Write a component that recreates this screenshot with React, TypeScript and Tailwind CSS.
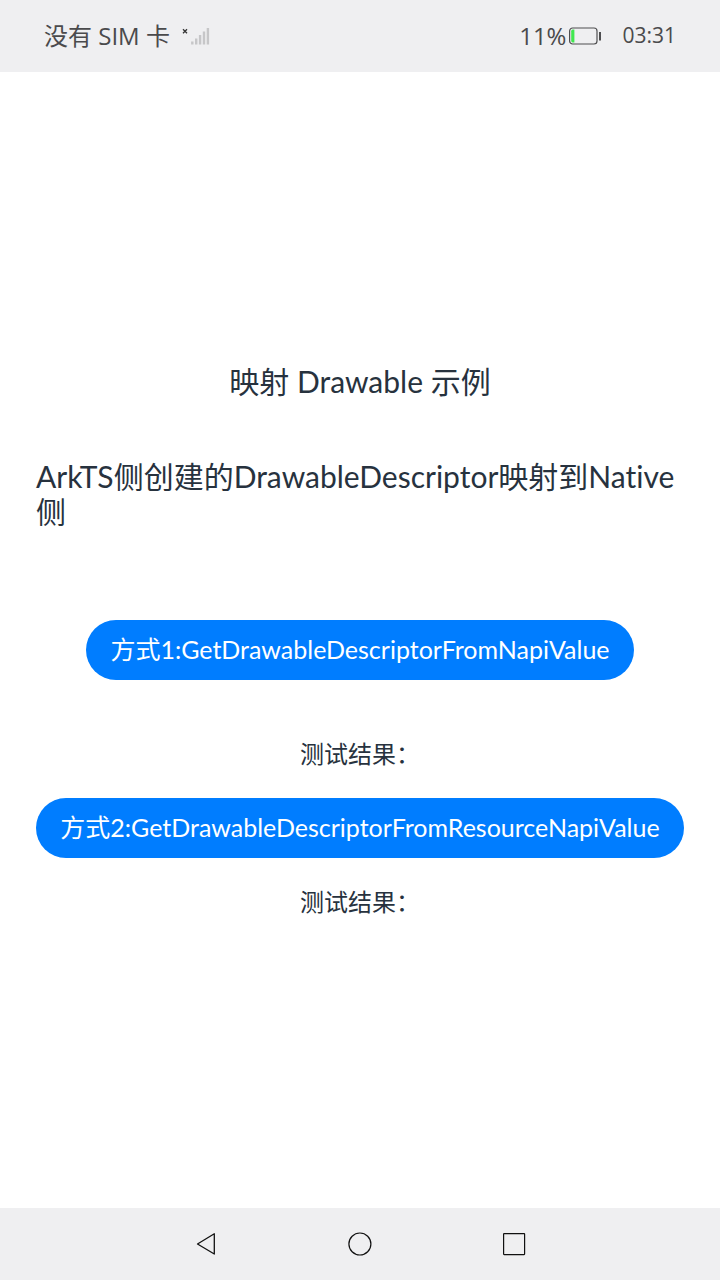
function SignalIcon() {
  return (
    <svg width="28" height="20" viewBox="0 0 28 20" aria-hidden="true">
      <path d="M1 3.2l4 4M5 3.2l-4 4" stroke="#333" strokeWidth="1.3" />
      <path
        d="M10.3 18.5v-3M14.2 18.5v-6M18.1 18.5v-9.5M22 18.5v-13M25.9 18.5v-16.5"
        stroke="#c6c6c8"
        strokeWidth="2.4"
      />
    </svg>
  );
}

function BatteryIcon() {
  return (
    <svg width="36" height="18" viewBox="0 0 36 18" aria-hidden="true">
      <rect x="3.6" y="1" width="27.4" height="16" rx="3" fill="none" stroke="#4f4f51" strokeWidth="1.2" />
      <path d="M8.4 2.6v12.8h-1.8q-1.4 0-1.4-1.6V4.2q0-1.6 1.4-1.6z" fill="#41e850" />
      <path d="M34 5v8.5" stroke="#3c3c3e" strokeWidth="1.8" />
    </svg>
  );
}

export default function App() {
  return (
    <div className="flex min-h-screen flex-col bg-white font-['Lato','Noto_Sans_CJK_SC',sans-serif] text-[#27323e] [font-variant-ligatures:none]">
      <header className="flex h-18 items-center justify-between bg-[#efeff1] px-11 font-['Open_Sans','Noto_Sans_CJK_SC',sans-serif] text-[#4a4a4c]">
        <div className="flex items-center gap-3">
          <span className="text-2xl">没有 SIM 卡</span>
          <SignalIcon />
        </div>
        <div className="flex items-center">
          <span className="text-2xl">11%</span>
          <BatteryIcon />
          <span className="ml-5 text-[21px]">03:31</span>
        </div>
      </header>
      <main className="flex flex-1 flex-col items-center justify-center px-9">
        <h1 className="text-[30px] leading-9">映射 Drawable 示例</h1>
        <p className="mt-15 w-full text-[30px] leading-[35px]">ArkTS侧创建的DrawableDescriptor映射到Native侧</p>
        <button
          type="button"
          className="mt-[91px] h-15 rounded-full bg-[#007dff] px-6 text-[25px] whitespace-nowrap text-white"
        >
          方式1:GetDrawableDescriptorFromNapiValue
        </button>
        <p className="mt-[58px] text-2xl leading-8">测试结果：</p>
        <button
          type="button"
          className="mt-7 h-15 rounded-full bg-[#007dff] px-6 text-[25px] whitespace-nowrap text-white"
        >
          方式2:GetDrawableDescriptorFromResourceNapiValue
        </button>
        <p className="mt-7 text-2xl leading-8">测试结果：</p>
      </main>
      <nav className="flex h-18 items-center justify-center gap-[114px] bg-[#efeff1]">
        <button type="button" aria-label="返回" className="flex size-10 items-center justify-center">
          <svg width="28" height="28" viewBox="0 0 28 28" fill="none" stroke="#111" strokeWidth="1.3" strokeLinejoin="round">
            <path d="M5.5 14L22.3 3.8v20.2z" />
          </svg>
        </button>
        <button type="button" aria-label="主页" className="flex size-10 items-center justify-center">
          <svg width="28" height="28" viewBox="0 0 28 28" fill="none" stroke="#111" strokeWidth="1.2">
            <circle cx="13.9" cy="14" r="11" />
          </svg>
        </button>
        <button type="button" aria-label="最近任务" className="flex size-10 items-center justify-center">
          <svg width="28" height="28" viewBox="0 0 28 28" fill="none" stroke="#111" strokeWidth="1.2">
            <rect x="3.6" y="3.6" width="21" height="21" rx="0.5" />
          </svg>
        </button>
      </nav>
    </div>
  );
}
